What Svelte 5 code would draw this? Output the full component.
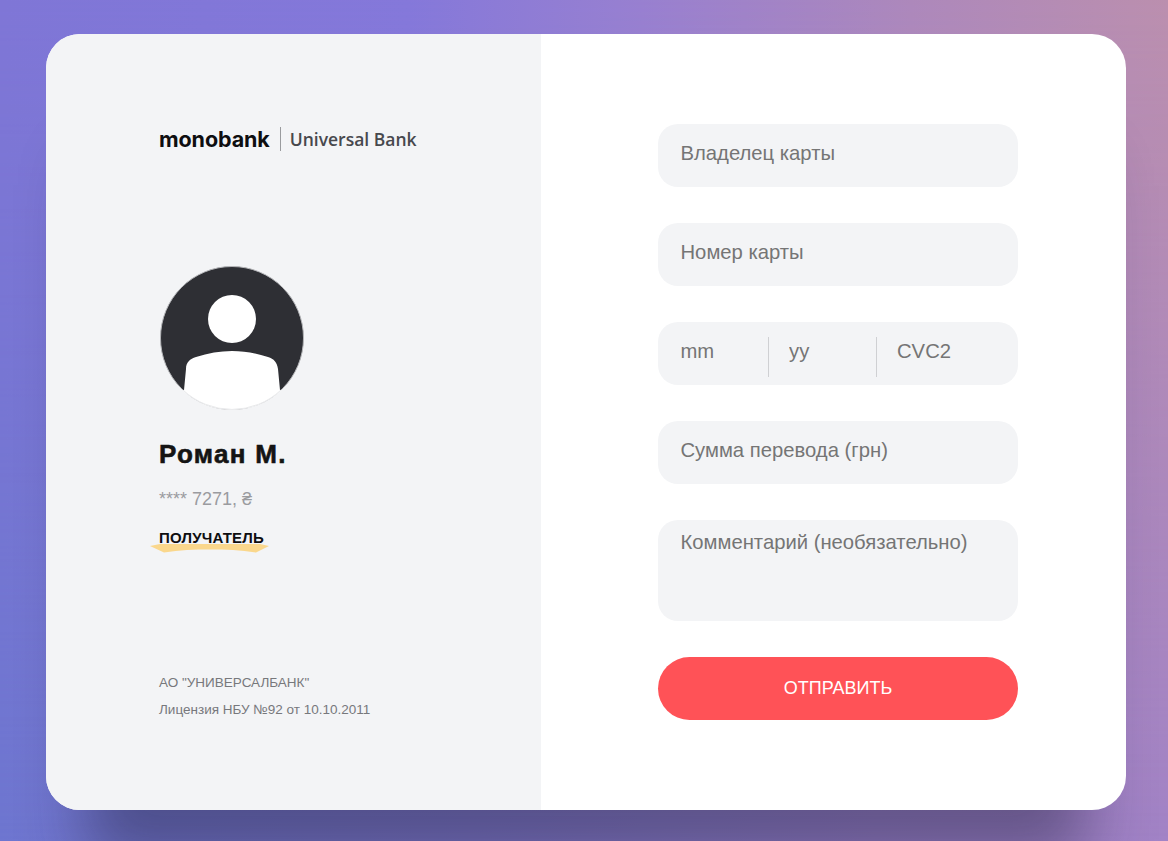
<script>
  const fields = ['Владелец карты', 'Номер карты'];
</script>

<div class="page">
  <main class="card">
    <section class="info">
      <div class="logo">
        <span class="mono">monobank</span>
        <span class="bank">Universal Bank</span>
      </div>

      <svg class="avatar" viewBox="0 0 144 144" width="144" height="144">
        <defs>
          <clipPath id="round"><circle cx="72" cy="72" r="72" /></clipPath>
        </defs>
        <circle cx="72" cy="72" r="71.5" fill="#2e2f34" stroke="#b4b5b8" stroke-width="1" />
        <circle cx="72" cy="53" r="24" fill="#fff" />
        <path clip-path="url(#round)" d="M24 124 L26 103 C26 96 30 93 36 91 C48 87 60 85 72 85 C84 85 96 87 108 91 C114 93 117 96 118 103 L120 124 L144 144 L0 144 Z" fill="#fff" />
        <path d="M23 124 A71.500 71.500 0 0 0 121 124" fill="none" stroke="#e8e9eb" stroke-width="1" />
      </svg>

      <h1>Роман М.</h1>
      <p class="number">**** 7271, ₴</p>
      <div class="role">
        <svg class="ribbon" viewBox="0 0 120 9" width="120" height="9">
          <path d="M0 2 L10 0 L110 0 L119 2 L106 8.500 C90 6 76 5.500 60 5.500 C44 5.500 30 6 14 8.500 Z" fill="#fad78c" />
        </svg>
        <span>ПОЛУЧАТЕЛЬ</span>
      </div>

      <footer>
        <p>АО "УНИВЕРСАЛБАНК"</p>
        <p>Лицензия НБУ №92 от 10.10.2011</p>
      </footer>
    </section>

    <section class="form-side">
      <form class="form">
        {#each fields as field}
          <input class="field" placeholder={field} />
        {/each}
        <div class="field-group">
          <input placeholder="mm" />
          <input placeholder="yy" />
          <input placeholder="CVC2" />
        </div>
        <input class="field" placeholder="Сумма перевода (грн)" />
        <textarea class="field comment" placeholder="Комментарий (необязательно)"></textarea>
        <button type="button">ОТПРАВИТЬ</button>
      </form>
    </section>
  </main>
</div>

<style>
  :global(body) {
    margin: 0;
    font-family: "Liberation Sans", Arial, sans-serif;
  }

  .page {
    position: relative;
    box-sizing: border-box;
    height: 841px;
    padding: 34px 42px 31px 46px;
    overflow: hidden;
    background: linear-gradient(to right, #6e76d0 0%, #8079cc 40%, #9a80ca 75%, #a283c6 100%);
  }

  /* top colour fading out towards the bottom */
  .page::before {
    content: "";
    position: absolute;
    inset: 0;
    background: linear-gradient(to right, #7f76d6 0%, #8578da 35%, #9880d0 55%, #ad88bb 78%, #bb8fae 100%);
    mask-image: linear-gradient(to bottom, #000 0%, transparent 100%);
  }

  .card {
    position: relative;
    display: flex;
    width: 1080px;
    height: 776px;
    border-radius: 34px;
    overflow: hidden;
    background: #fff;
    box-shadow: 0 90px 60px -40px rgba(30, 30, 60, 0.45);
  }

  .info {
    box-sizing: border-box;
    display: flex;
    flex-direction: column;
    align-items: flex-start;
    width: 495px;
    padding: 92px 0 0 113px;
    background: #f3f4f6;
  }

  .logo {
    display: flex;
    align-items: center;
    height: 26px;
  }

  .mono {
    padding-right: 10px;
    font-family: Inter, sans-serif;
    font-size: 21.500px;
    font-weight: 700;
    letter-spacing: -0.1px;
    color: #0e0e10;
  }

  .bank {
    padding-left: 9px;
    border-left: 1px solid #9a9b9e;
    font-family: "Open Sans", sans-serif;
    font-size: 17.500px;
    font-weight: 600;
    line-height: 24px;
    color: #47484d;
  }

  .avatar {
    display: block;
    margin: 114px 0 0 1px;
  }

  h1 {
    margin: 26px 0 0;
    font-size: 26px;
    line-height: 36px;
    font-weight: 700;
    letter-spacing: 1.3px;
    -webkit-text-stroke: 0.6px #141414;
    color: #141414;
  }

  .number {
    margin: 14px 0 0;
    font-size: 18px;
    line-height: 26px;
    color: #9a9b9f;
  }

  .role {
    position: relative;
    margin-top: 16px;
    font-size: 15px;
    line-height: 20px;
    font-weight: 700;
    letter-spacing: 0.2px;
    color: #0e0e10;
  }

  .role span {
    position: relative;
  }

  .ribbon {
    position: absolute;
    left: -9px;
    top: 16px;
  }

  footer {
    margin-top: 121px;
    font-size: 13.500px;
    line-height: 27px;
    color: #77787c;
  }

  footer p {
    margin: 0;
  }

  .form-side {
    flex: 1;
    padding: 90px 0 0 117px;
  }

  .form {
    display: flex;
    flex-direction: column;
    gap: 36px;
    width: 360px;
  }

  input,
  textarea {
    box-sizing: border-box;
    margin: 0;
    border: 0;
    outline: 0;
    font-family: inherit;
    font-size: 20.250px;
    color: #333;
    background: transparent;
  }

  .field {
    display: block;
    width: 100%;
    height: 63px;
    padding: 0 23px 4px 22.500px;
    border-radius: 20px;
    background: #f3f4f6;
  }

  .comment {
    height: 101px;
    padding: 11px 23px 0 22.500px;
    resize: none;
  }

  .field-group {
    display: flex;
    align-items: flex-end;
    height: 63px;
    padding-bottom: 8px;
    box-sizing: border-box;
    border-radius: 20px;
    background: #f3f4f6;
  }

  .field-group input {
    flex: 0 0 108px;
    width: 108px;
    height: 40px;
    padding: 0 0 12px 20px;
    border-left: 1px solid #cfd0d3;
  }

  .field-group input:first-child {
    flex-basis: 110px;
    width: 110px;
    padding-left: 22.500px;
    border-left: 0;
  }

  button {
    height: 63px;
    border: 0;
    border-radius: 32px;
    font-family: inherit;
    font-size: 18px;
    color: #fff;
    background: #ff5257;
  }
</style>
